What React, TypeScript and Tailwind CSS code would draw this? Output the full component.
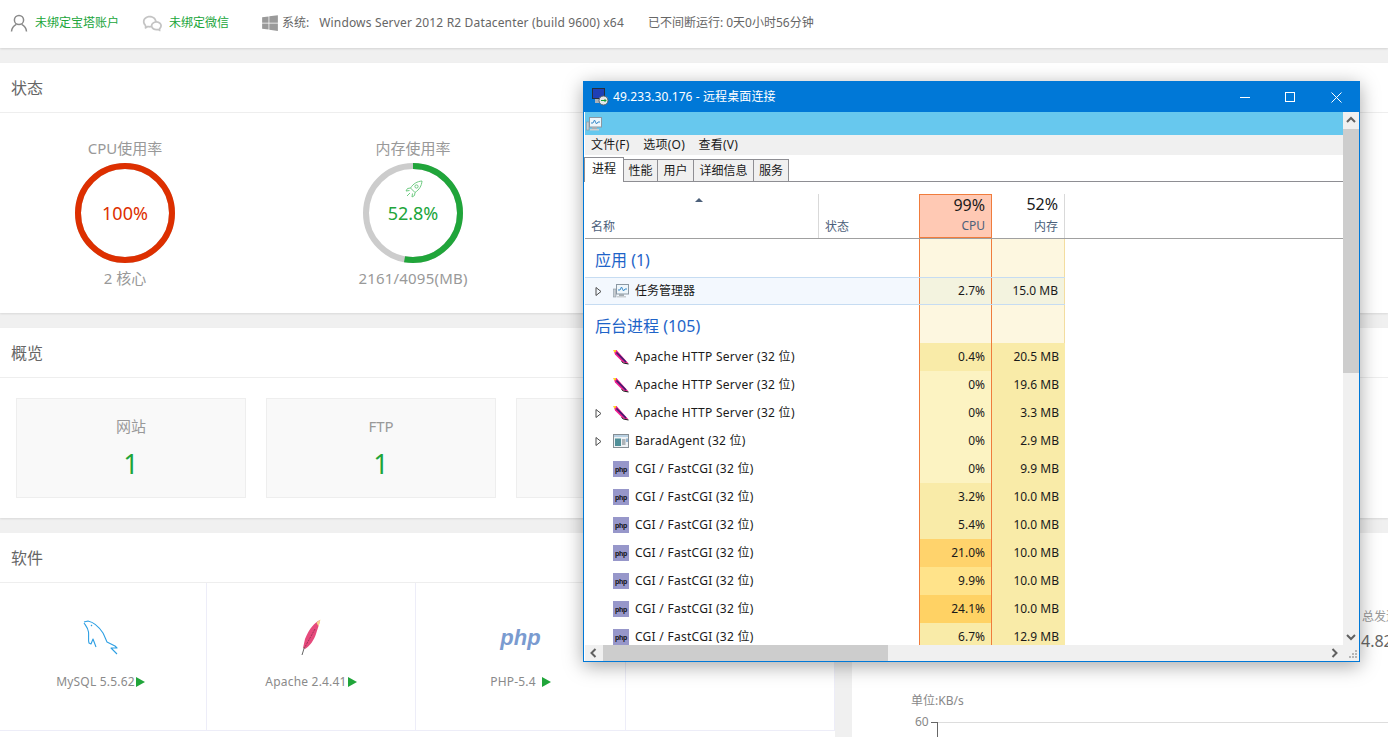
import { FaWindows } from "react-icons/fa";
import { RiWechatLine } from "react-icons/ri";

const FONT = "font-['Noto_Sans','Noto_Sans_CJK_SC',sans-serif]";

type Row = {
  kind: "apache" | "app" | "php" | "task";
  name: string;
  expand?: boolean;
  cpu: string;
  mem: string;
  cpuBg: string;
};

const ROWS: Row[] = [
  { kind: "apache", name: "Apache HTTP Server (32 位)", cpu: "0.4%", mem: "20.5 MB", cpuBg: "bg-[#f9eba8]" },
  { kind: "apache", name: "Apache HTTP Server (32 位)", cpu: "0%", mem: "19.6 MB", cpuBg: "bg-[#fcf3c2]" },
  { kind: "apache", name: "Apache HTTP Server (32 位)", expand: true, cpu: "0%", mem: "3.3 MB", cpuBg: "bg-[#fcf3c2]" },
  { kind: "app", name: "BaradAgent (32 位)", expand: true, cpu: "0%", mem: "2.9 MB", cpuBg: "bg-[#fcf3c2]" },
  { kind: "php", name: "CGI / FastCGI (32 位)", cpu: "0%", mem: "9.9 MB", cpuBg: "bg-[#fcf3c2]" },
  { kind: "php", name: "CGI / FastCGI (32 位)", cpu: "3.2%", mem: "10.0 MB", cpuBg: "bg-[#f9eba8]" },
  { kind: "php", name: "CGI / FastCGI (32 位)", cpu: "5.4%", mem: "10.0 MB", cpuBg: "bg-[#f9eba8]" },
  { kind: "php", name: "CGI / FastCGI (32 位)", cpu: "21.0%", mem: "10.0 MB", cpuBg: "bg-[#ffd36c]" },
  { kind: "php", name: "CGI / FastCGI (32 位)", cpu: "9.9%", mem: "10.0 MB", cpuBg: "bg-[#ffe38a]" },
  { kind: "php", name: "CGI / FastCGI (32 位)", cpu: "24.1%", mem: "10.0 MB", cpuBg: "bg-[#ffd264]" },
  { kind: "php", name: "CGI / FastCGI (32 位)", cpu: "6.7%", mem: "12.9 MB", cpuBg: "bg-[#f9eba8]" },
];

function Ring({ pct, color }: { pct: number; color: string }) {
  const r = 47;
  const c = 2 * Math.PI * r;
  return (
    <svg width="100" height="100" viewBox="0 0 100 100" className="block">
      <circle cx="50" cy="50" r={r} fill="none" stroke="#cccccc" strokeWidth="6" />
      <circle
        cx="50"
        cy="50"
        r={r}
        fill="none"
        stroke={color}
        strokeWidth="6"
        strokeDasharray={`${(c * pct) / 100} ${c}`}
        transform="rotate(-90 50 50)"
      />
    </svg>
  );
}

function Rocket() {
  return (
    <svg width="18" height="18" viewBox="0 0 18 18" fill="none" stroke="#6fcb82" strokeWidth="1" strokeLinejoin="round">
      <path d="M17 1 C12 1.5 8.5 3.5 5.5 8 L10 12.5 C14.5 9.5 16.5 6 17 1 Z" />
      <circle cx="11.5" cy="6.5" r="1.6" />
      <path d="M5.5 8 L2.5 8.5 L1 11 L4.5 10.5 M10 12.5 L9.5 15.5 L7 17 L7.5 13.5 M2 16 L5 13" />
    </svg>
  );
}

function UserIcon() {
  return (
    <svg width="18" height="18" viewBox="0 0 18 18" fill="none" stroke="#8a8a8a" strokeWidth="1.5" className="ml-[10px]">
      <circle cx="9" cy="6" r="4.6" />
      <path d="M1.5 17.5 C1.8 13.5 4 11.6 6.3 10.4 M16.5 17.5 C16.2 13.5 14 11.6 11.7 10.4" />
    </svg>
  );
}

function Feather() {
  return (
    <svg width="16" height="16" viewBox="0 0 16 16">
      <path d="M0.5 1 L3.5 1 L15.5 14.5 L10 13.5 L2 5.5 Z" fill="#ee1c8e" />
      <path d="M0.5 1 L3 1 L2.6 3.2 L1 3.2 Z" fill="#ffe21a" />
      <path d="M3.5 3.5 L13 13" stroke="#37206f" strokeWidth="1.6" />
      <path d="M8.5 12.5 L10.5 14 L15.5 15" fill="none" stroke="#111111" strokeWidth="1" />
    </svg>
  );
}

function TaskIcon() {
  return (
    <svg width="16" height="16" viewBox="0 0 16 16">
      <rect x="3.5" y="1.5" width="12" height="9.5" fill="#eef6fb" stroke="#8b98a3" />
      <path d="M5 7 L7 7 L8.5 4 L10.5 8 L12 6 L14 6" fill="none" stroke="#3b8bc9" />
      <rect x="0.5" y="6" width="2.5" height="8" fill="#c9ced2" stroke="#8b98a3" strokeWidth="0.6" />
      <rect x="6" y="11" width="5" height="2" fill="#a5adb3" />
      <rect x="4" y="13" width="9" height="1.5" fill="#c9ced2" />
    </svg>
  );
}

function AppIcon() {
  return (
    <svg width="16" height="16" viewBox="0 0 16 16">
      <rect x="0.5" y="1.5" width="15" height="13" fill="#eef2f5" stroke="#868e94" />
      <rect x="1" y="2" width="14" height="2" fill="#b8d0e2" />
      <rect x="2" y="5.5" width="6" height="7.5" fill="#4f8f98" />
      <path d="M9 7 H12.5 M9 9 H12.5 M9 11 H12.5" stroke="#6d767c" />
      <path d="M14 5.5 V9" stroke="#3a78b0" />
    </svg>
  );
}

function PhpIcon() {
  return (
    <span className="flex h-4 w-4 items-center justify-center overflow-hidden bg-[#9797ca] font-['Liberation_Sans',sans-serif] text-[7px] font-bold leading-none tracking-[-0.2px] text-[#111111]">
      php
    </span>
  );
}

function RowIcon({ kind }: { kind: Row["kind"] }) {
  if (kind === "apache") return <Feather />;
  if (kind === "app") return <AppIcon />;
  if (kind === "task") return <TaskIcon />;
  return <PhpIcon />;
}

function Expander() {
  return (
    <svg width="7" height="9" viewBox="0 0 7 9" className="block">
      <path d="M1 0.5 L6 4.5 L1 8.5 Z" fill="none" stroke="#4d4d4d" />
    </svg>
  );
}

function Chevron({ dir }: { dir: "up" | "down" | "left" | "right" }) {
  const d = {
    up: "M1 6 L5 2 L9 6",
    down: "M1 3 L5 7 L9 3",
    left: "M6.5 1 L2.5 5 L6.5 9",
    right: "M3.5 1 L7.5 5 L3.5 9",
  }[dir];
  return (
    <svg width="10" height="10" viewBox="0 0 10 10" fill="none" stroke="#606060" strokeWidth="2">
      <path d={d} />
    </svg>
  );
}

function RemoteWindow() {
  return (
    <div className="absolute left-[583px] top-[81px] flex h-[581px] w-[777px] flex-col border border-[#0078d7] bg-white shadow-[0_4px_18px_rgba(0,0,0,0.35)]">
      <div className="flex h-[30px] shrink-0 items-center bg-[#0078d7] pl-[8px] text-[#ffffff]">
        <svg width="17" height="18" viewBox="0 0 17 18">
          <rect x="0.5" y="0.5" width="12" height="10" fill="#1f3fb5" stroke="#26303a" />
          <rect x="3" y="11" width="6" height="4" fill="#aab2ba" />
          <circle cx="11.5" cy="12.5" r="4.5" fill="#e5e8ea" stroke="#59636b" />
          <path d="M9 12.5 H14 M12.5 11 L14 12.5 L12.5 14" stroke="#19a03a" fill="none" />
        </svg>
        <span className="ml-[4px] text-[12px] tracking-[0.1px]">49.233.30.176 - 远程桌面连接</span>
        <div className="ml-auto flex items-center">
          <span className="mr-[35px] h-px w-[10px] bg-white" />
          <span className="mr-[36px] h-[10px] w-[10px] border border-white" />
          <svg width="11" height="11" viewBox="0 0 11 11" className="mr-[17px]" stroke="#fff" strokeWidth="1">
            <path d="M0.5 0.5 L10.5 10.5 M10.5 0.5 L0.5 10.5" />
          </svg>
        </div>
      </div>

      <div className="flex min-h-0 flex-1">
        <div className="flex min-w-0 flex-1 flex-col pl-px">
          <div className="flex h-[23px] shrink-0 items-center bg-[#67c8ee] pl-px">
            <TaskIcon />
          </div>
          <div className="flex h-[20px] shrink-0 items-center gap-[13.5px] bg-[#f0f0f0] pl-[6px] text-[12px] tracking-[0.25px] text-[#1a1a1a]">
            <span>文件(F)</span>
            <span>选项(O)</span>
            <span>查看(V)</span>
          </div>

          <div className="-ml-px flex h-[27px] shrink-0 items-end border-b border-[#8e8e93] text-[12px] text-[#1a1a1a]">
            <div className="relative top-px flex h-[25px] w-[40px] items-start justify-center border border-b-0 border-[#8e8e93] bg-white pt-[2px]">进程</div>
            <div className="flex h-[22px] w-[34px] items-center justify-center border border-b-0 border-l-0 border-[#8e8e93] bg-[#f0f0f0]">性能</div>
            <div className="flex h-[22px] w-[36px] items-center justify-center border border-b-0 border-l-0 border-[#8e8e93] bg-[#f0f0f0]">用户</div>
            <div className="flex h-[22px] w-[60px] items-center justify-center border border-b-0 border-l-0 border-[#8e8e93] bg-[#f0f0f0]">详细信息</div>
            <div className="flex h-[22px] w-[35px] items-center justify-center border border-b-0 border-l-0 border-[#8e8e93] bg-[#f0f0f0]">服务</div>
          </div>

          <div className="grid h-[57px] shrink-0 grid-cols-[234px_100px_73px_73px] border-b border-[#a0a0a0] pt-[12px] text-[12px] text-[#4c607a]">
            <div className="relative flex items-end border-r border-[#d9d9d9] pb-[2px] pl-[6px]">
              名称
              <span className="absolute left-[110px] top-[4px] h-0 w-0 border-x-[4px] border-b-[4px] border-x-transparent border-b-[#4c607a]" />
            </div>
            <div className="flex items-end pb-[2px] pl-[6px]">状态</div>
            <div className="flex flex-col items-end justify-between border border-[#f07c3c] bg-[#ffc9b4] pb-[2px] pr-[6px]">
              <span className="text-[16px] leading-[20px] text-[#1a1a1a]">99%</span>
              <span>CPU</span>
            </div>
            <div className="flex flex-col items-end justify-between border-r border-[#d9d9d9] pb-[2px] pr-[6px]">
              <span className="text-[16px] leading-[20px] text-[#1a1a1a]">52%</span>
              <span>内存</span>
            </div>
          </div>

          <div className="min-h-0 flex-1 overflow-hidden text-[12px] text-[#1a1a1a]">
            <div className="grid h-[38px] w-[480px] grid-cols-[334px_73px_73px]">
              <div className="flex items-center pl-[10px] pt-[4px] text-[16px] text-[#1e64c8]">应用 (1)</div>
              <div className="border-x border-[#f07c3c] bg-[#fdf7e0]" />
              <div className="border-r border-[#f3dda0] bg-[#fdf7e0]" />
            </div>
            <div className="grid h-[28px] w-[480px] grid-cols-[334px_73px_73px] border-y border-[#c6dcf2]">
              <div className="flex items-center bg-[#f3f8fe]">
                <span className="ml-[10px] w-[18px]"><Expander /></span>
                <TaskIcon />
                <span className="ml-[6px]">任务管理器</span>
              </div>
              <div className="flex items-center justify-end border-x border-[#f07c3c] bg-[#f3f3df] pr-[6px]">2.7%</div>
              <div className="flex items-center justify-end border-r border-[#f3dda0] bg-[#f3f3df] pr-[6px]">15.0 MB</div>
            </div>
            <div className="grid h-[38px] w-[480px] grid-cols-[334px_73px_73px]">
              <div className="flex items-center pl-[10px] pt-[4px] text-[16px] text-[#1e64c8]">后台进程 (105)</div>
              <div className="border-x border-[#f07c3c] bg-[#fdf7e0]" />
              <div className="border-r border-[#f3dda0] bg-[#fdf7e0]" />
            </div>
            {ROWS.map((row, i) => (
              <div key={i} className="grid h-[28px] w-[480px] grid-cols-[334px_73px_73px]">
                <div className="flex items-center">
                  <span className="ml-[10px] w-[18px]">{row.expand && <Expander />}</span>
                  <RowIcon kind={row.kind} />
                  <span className="ml-[6px] tracking-[0.27px]">{row.name}</span>
                </div>
                <div className={`flex items-center justify-end border-x border-[#f07c3c] pr-[6px] ${row.cpuBg}`}>{row.cpu}</div>
                <div className="flex items-center justify-end bg-[#f9eba8] pr-[6px]">{row.mem}</div>
              </div>
            ))}
          </div>

          <div className="flex h-[16px] shrink-0 items-center bg-[#f0f0f0]">
            <span className="flex w-[18px] justify-center"><Chevron dir="left" /></span>
            <span className="h-full w-[285px] bg-[#cdcdcd]" />
            <span className="ml-auto flex w-[18px] justify-center"><Chevron dir="right" /></span>
          </div>
        </div>

        <div className="flex w-[16px] shrink-0 flex-col bg-[#f0f0f0]">
          <span className="flex h-[17px] items-center justify-center"><Chevron dir="up" /></span>
          <span className="h-[244px] bg-[#cdcdcd]" />
          <span className="mt-auto flex h-[17px] items-center justify-center"><Chevron dir="down" /></span>
          <span className="flex h-[16px] items-end justify-end pb-[2px] pr-[1px]">
            <svg width="9" height="9" viewBox="0 0 9 9" fill="#b5b5b5">
              <path d="M6 0h2v2H6zM3 3h2v2H3zM6 3h2v2H6zM0 6h2v2H0zM3 6h2v2H3zM6 6h2v2H6z" />
            </svg>
          </span>
        </div>
      </div>
    </div>
  );
}

function Stat({ label, value }: { label: string; value: string }) {
  return (
    <div className="flex h-[100px] w-[230px] flex-col items-center border border-[#eeeeee] bg-[#f9f9f9] pt-[16px]">
      <span className="text-[15px] leading-[22px] text-[#999999]">{label}</span>
      <span className="mt-[8px] text-[27px] leading-[38px] text-[#20a53a]">{value}</span>
    </div>
  );
}

function Play() {
  return <span className="ml-[1px] inline-block h-0 w-0 border-y-[5px] border-l-[9px] border-y-transparent border-l-[#20a53a]" />;
}

function Software({ name, children, gap = "", shift = "" }: { name: string; children: React.ReactNode; gap?: string; shift?: string }) {
  return (
    <div className="flex flex-col items-center border-r border-[#ededf8] pt-[28px]">
      <div className="flex h-[54px] items-center justify-center">{children}</div>
      <div className={`mt-[9px] flex items-center text-[12px] leading-[16px] tracking-[0.2px] text-[#8a8a8a] ${shift}`}>
        <span className={gap}>{name}</span>
        <Play />
      </div>
    </div>
  );
}

function CardTitle({ children }: { children: React.ReactNode }) {
  return <div className="flex h-[50px] items-center border-b border-[#eeeeee] pl-[11px] text-[16px] text-[#666666]">{children}</div>;
}

export default function App() {
  return (
    <div className={`relative h-[737px] w-[1388px] overflow-hidden bg-[#f0f0f0] ${FONT}`}>
      <header className="flex h-[48px] items-center bg-white pb-[2px] text-[12px] shadow-[0_1px_2px_rgba(0,0,0,0.12)]">
        <UserIcon />
        <span className="ml-[7px] text-[#20a53a]">未绑定宝塔账户</span>
        <RiWechatLine className="ml-[23px] text-[21px] text-[#c4c4c4]" />
        <span className="ml-[6px] text-[#20a53a]">未绑定微信</span>
        <FaWindows className="ml-[32px] text-[18px] text-[#9a9a9a]" />
        <span className="ml-[3px] text-[#666666]">系统:</span>
        <span className="ml-[10px] tracking-[0.16px] text-[#666666]">Windows Server 2012 R2 Datacenter (build 9600) x64</span>
        <span className="ml-[24px] text-[#666666]">已不间断运行: 0天0小时56分钟</span>
      </header>

      <section className="mt-[15px] h-[250px] bg-white shadow-[0_1px_2px_rgba(0,0,0,0.1)]">
        <CardTitle>状态</CardTitle>
        <div className="flex gap-[38px] pt-[24px]">
          <div className="flex w-[250px] flex-col items-center">
            <span className="text-[15px] leading-[22px] text-[#999999]">CPU使用率</span>
            <div className="relative mt-[4px]">
              <Ring pct={100} color="#dd2f00" />
              <span className="absolute inset-0 flex items-center justify-center text-[18px] text-[#dd2f00]">100%</span>
            </div>
            <span className="mt-[4px] text-[15px] leading-[22px] text-[#999999]">2 核心</span>
          </div>
          <div className="flex w-[250px] flex-col items-center">
            <span className="text-[15px] leading-[22px] text-[#999999]">内存使用率</span>
            <div className="relative mt-[4px]">
              <Ring pct={52.8} color="#20a53a" />
              <span className="absolute left-[42px] top-[17px]"><Rocket /></span>
              <span className="absolute inset-0 flex items-center justify-center text-[18px] text-[#20a53a]">52.8%</span>
            </div>
            <span className="mt-[4px] text-[15px] leading-[22px] tracking-[0.2px] text-[#999999]">2161/4095(MB)</span>
          </div>
        </div>
      </section>

      <section className="mt-[15px] h-[190px] bg-white shadow-[0_1px_2px_rgba(0,0,0,0.1)]">
        <CardTitle>概览</CardTitle>
        <div className="flex gap-[20px] pl-[16px] pt-[20px]">
          <Stat label="网站" value="1" />
          <Stat label="FTP" value="1" />
          <Stat label="数据库" value="1" />
        </div>
      </section>

      <div className="mt-[15px] flex h-[204px] gap-[17px]">
        <section className="w-[835px] shrink-0 bg-white">
          <CardTitle>软件</CardTitle>
          <div className="grid h-[148px] grid-cols-[207px_209px_210px_209px] border-b border-[#ededf8]">
            <Software name="MySQL 5.5.62" shift="mr-[5px]">
              <svg width="36" height="38" viewBox="0 0 36 38" fill="none" stroke="#2d9fe3" strokeWidth="1.1" strokeLinejoin="round" className="mr-[6px]">
                <path d="M2 3 L6 2 C11 3 17 8 21 14 C23 18 24 21 25 23 L33 27 L35 29 L29 29 L35 35" />
                <path d="M2 4 C4 7 6 9 6.5 13 C7 17 6 21 7 24 L9 25 L11 20 L14 28" />
                <path d="M9 6 L10 7" />
              </svg>
            </Software>
            <Software name="Apache 2.4.41">
              <svg width="20" height="38" viewBox="0 0 20 38">
                <path d="M19 1 C14 3 8 10 4 20 L2 29 L4 30 C9 27 13 21 15 15 C16 11 18 7 19 1 Z" fill="#e64a7c" />
                <path d="M19.5 0.5 L15.5 3.5 L17.5 7.5 Z" fill="#f6d88e" />
                <path d="M14 10 L4 28" fill="none" stroke="#8c2f50" strokeWidth="0.8" strokeDasharray="2 1" />
                <path d="M3.5 28 L1 36" fill="none" stroke="#666666" strokeWidth="1" />
              </svg>
            </Software>
            <Software name="PHP-5.4" gap="mr-[5px]">
              <span className="font-['Liberation_Sans',sans-serif] text-[22px] font-bold italic leading-none text-[#7a9bd0]">php</span>
            </Software>
            <div className="border-r border-[#ededf8]" />
          </div>
        </section>

        <section className="relative min-w-0 flex-1 overflow-hidden bg-white pl-[59px] pt-[160px]">
          <div className="absolute left-[510px] top-[75px] whitespace-nowrap text-[12px] text-[#999999]">总发送</div>
          <div className="absolute left-[509px] top-[96px] whitespace-nowrap text-[16px] text-[#666666]">4.82</div>
          <div className="text-[12px] leading-[16px] text-[#888888]">单位:KB/s</div>
          <div className="mt-[5px] flex items-start text-[12px] leading-[16px] text-[#888888]">
            <span className="ml-[4px]">60</span>
            <div className="ml-[2px] mt-[8px] h-[40px] w-[7px] border-r border-t border-[#666666]" />
            <div className="mt-[8px] h-px flex-1 bg-[#dddddd]" />
          </div>
        </section>
      </div>

      <RemoteWindow />
    </div>
  );
}
